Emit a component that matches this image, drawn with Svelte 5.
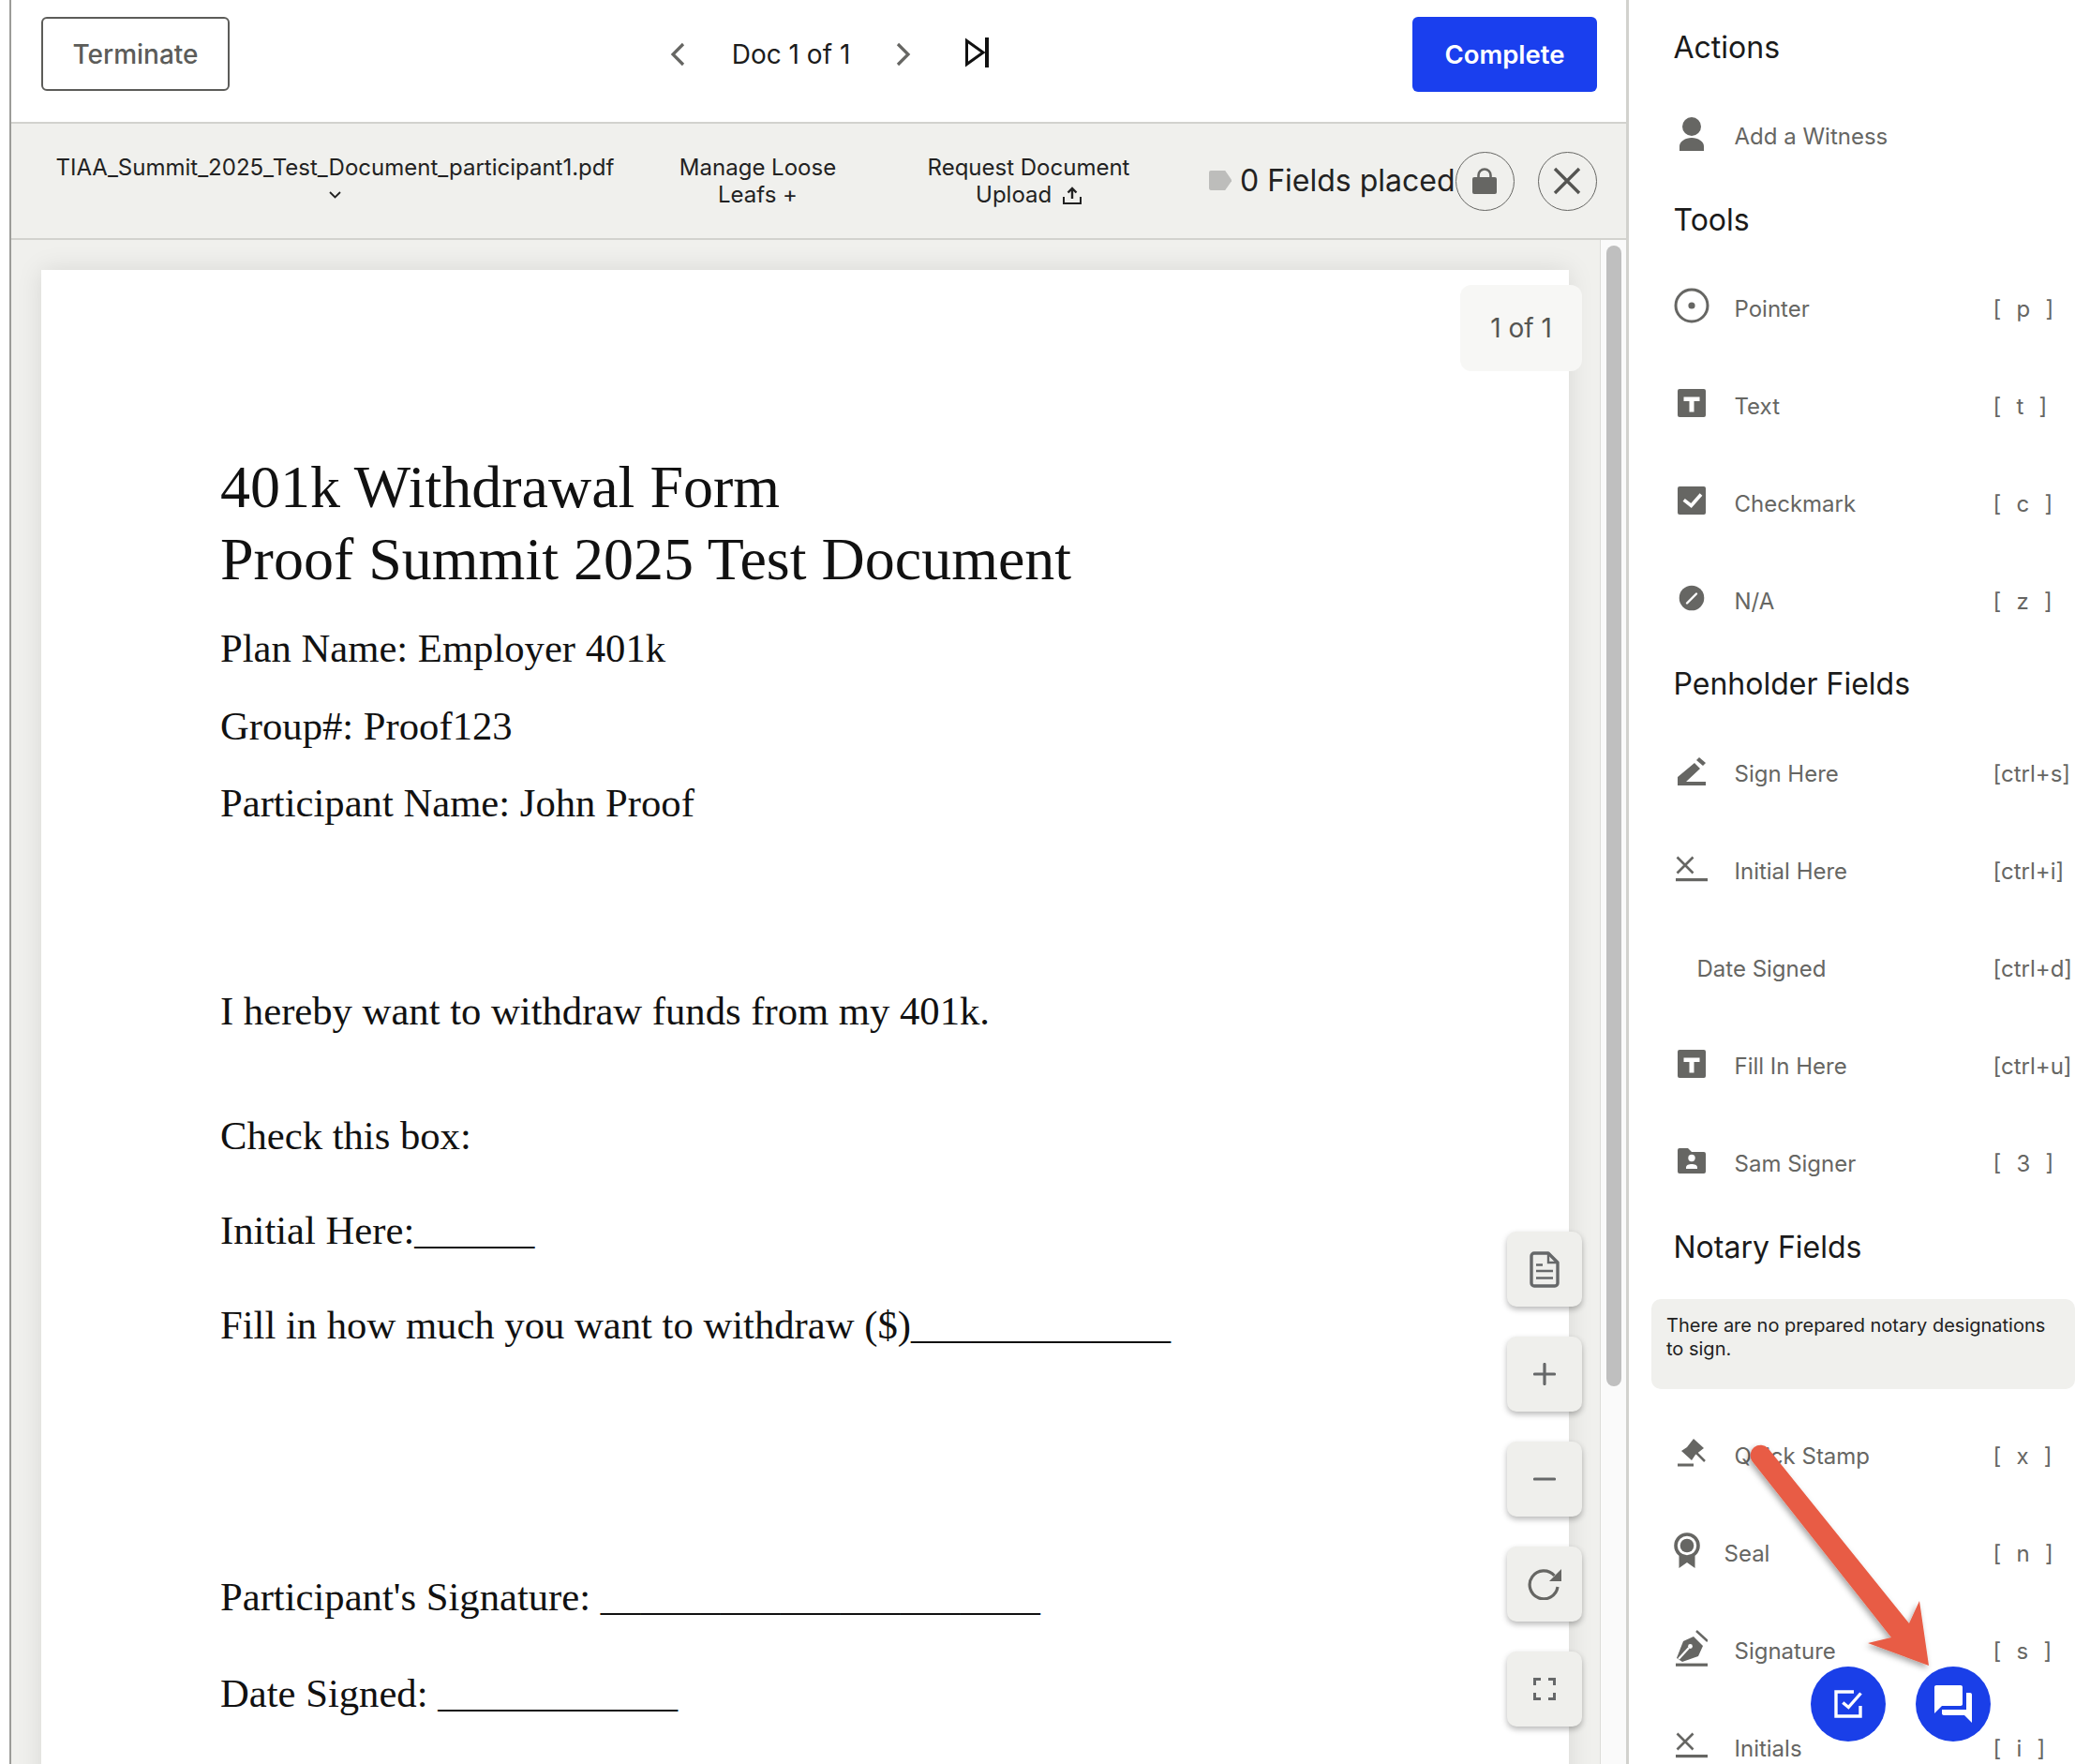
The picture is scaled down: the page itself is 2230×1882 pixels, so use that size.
<script>
  const tools = [
    { icon: 'pointer', label: 'Pointer', key: '[ p ]' },
    { icon: 'text', label: 'Text', key: '[ t ]' },
    { icon: 'check', label: 'Checkmark', key: '[ c ]' },
    { icon: 'na', label: 'N/A', key: '[ z ]' }
  ];
  const pen = [
    { icon: 'sign', label: 'Sign Here', key: '[ctrl+s]' },
    { icon: 'initial', label: 'Initial Here', key: '[ctrl+i]' },
    { icon: '', label: 'Date Signed', key: '[ctrl+d]', cls: 'narrow' },
    { icon: 'text', label: 'Fill In Here', key: '[ctrl+u]' },
    { icon: 'folder', label: 'Sam Signer', key: '[ 3 ]' }
  ];
  const notary = [
    { icon: 'gavel', label: 'Quick Stamp', key: '[ x ]' },
    { icon: 'seal', label: 'Seal', key: '[ n ]', cls: 'mid' },
    { icon: 'nib', label: 'Signature', key: '[ s ]' },
    { icon: 'initial', label: 'Initials', key: '[ i ]' }
  ];
</script>

{#snippet glyph(name)}
  {#if name === 'pointer'}
    <svg width="38" height="38" viewBox="0 0 38 38"><circle cx="19" cy="19" r="17" fill="none" stroke="#666663" stroke-width="3"/><circle cx="19" cy="19" r="3.6" fill="#666663"/></svg>
  {:else if name === 'text'}
    <svg width="30" height="30" viewBox="0 0 30 30"><rect width="30" height="30" rx="2" fill="#666663"/><path d="M6.500 8.500h17v4.600h-6v11.400h-5V13.100h-6z" fill="#fff"/></svg>
  {:else if name === 'check'}
    <svg width="30" height="30" viewBox="0 0 30 30"><rect width="30" height="30" rx="2" fill="#666663"/><path d="M6.700 14.300l7.800 6.200 10.500-12" fill="none" stroke="#fff" stroke-width="3.600"/></svg>
  {:else if name === 'na'}
    <svg width="28" height="28" viewBox="0 0 28 28"><circle cx="14" cy="14" r="13.300" fill="#666663"/><path d="M9 19.500l10-10" stroke="#fff" stroke-width="2.400" stroke-linecap="round"/></svg>
  {:else if name === 'sign'}
    <svg width="30" height="30" viewBox="0 0 30 30"><path d="M0 30v-9L18 6l6 6L9 26h21v4z" fill="#666663"/><path d="M20 3l3-3 7 6-3 3z" fill="#666663"/></svg>
  {:else if name === 'initial'}
    <svg width="34" height="28" viewBox="0 0 34 28"><path d="M1.500 1.500l17 17m0-17l-17 17" stroke="#666663" stroke-width="2.600" fill="none"/><rect y="24" width="34" height="3.200" fill="#666663"/></svg>
  {:else if name === 'folder'}
    <svg width="30" height="27" viewBox="0 0 30 27"><path d="M0 2a2 2 0 0 1 2-2h9l4 4h13a2 2 0 0 1 2 2v19a2 2 0 0 1-2 2H2a2 2 0 0 1-2-2z" fill="#666663"/><circle cx="15" cy="10.500" r="3.700" fill="#fff"/><path d="M9 22v-1.500c0-2.500 3-3.500 6-3.500s6 1 6 3.500V22z" fill="#fff"/></svg>
  {:else if name === 'gavel'}
    <svg width="30" height="30" viewBox="0 0 30 30"><path d="M4 13L10 9 17 0l11 10-9 7-4 6z" fill="#666663"/><path d="M20 15l9 9" stroke="#666663" stroke-width="2.500"/><rect y="26.500" width="17" height="3" fill="#666663"/></svg>
  {:else if name === 'seal'}
    <svg width="28" height="38" viewBox="0 0 28 38"><circle cx="14" cy="14" r="12" fill="none" stroke="#666663" stroke-width="3.600"/><circle cx="14" cy="14" r="7.300" fill="#666663"/><path d="M5.500 24.500q8.500 5 17 0V38L14 32l-8.500 6z" fill="#666663"/></svg>
  {:else if name === 'nib'}
    <svg width="34" height="39" viewBox="0 0 34 39"><path d="M22 1l12 11" stroke="#666663" stroke-width="2.400"/><path d="M1 30l7-18 11-5 10 10-5 11-17 6z" fill="#666663"/><path d="M3 31l11-12" stroke="#fff" stroke-width="2.200"/><circle cx="15.500" cy="17.500" r="2.400" fill="#fff"/><rect y="35.600" width="34" height="3.200" fill="#666663"/></svg>
  {/if}
{/snippet}

{#snippet row(item)}
  <div class="row {item.cls ?? ''}">
    <div class="slot">{@render glyph(item.icon)}</div>
    <div class="label">{item.label}</div>
    <div class="key">{item.key}</div>
  </div>
{/snippet}

<div class="app">
  <main class="main">
    <header class="topbar">
      <button class="terminate">Terminate</button>
      <div class="pager">
        <svg class="chev" width="16" height="26" viewBox="0 0 16 26"><path d="M14 2L3 13l11 11" fill="none" stroke="#666663" stroke-width="3.200"/></svg>
        <span class="doc-count">Doc 1 of 1</span>
        <svg class="chev" width="16" height="26" viewBox="0 0 16 26"><path d="M2 2l11 11L2 24" fill="none" stroke="#666663" stroke-width="3.200"/></svg>
        <svg class="skip" width="26" height="32" viewBox="0 0 26 32"><path d="M2.500 3.500L20 16 2.500 28.500z" fill="none" stroke="#111" stroke-width="3"/><rect x="22" width="4" height="32" fill="#111"/></svg>
      </div>
      <button class="complete">Complete</button>
    </header>

    <div class="subbar">
      <div class="sub-item file">
        <div>TIAA_Summit_2025_Test_Document_participant1.pdf</div>
        <svg class="down" width="13" height="8" viewBox="0 0 13 8"><path d="M1 1l5.500 5.500L12 1" fill="none" stroke="#222" stroke-width="1.800"/></svg>
      </div>
      <div class="sub-item loose">Manage Loose<br />Leafs +</div>
      <div class="sub-item request">
        Request Document<br />Upload
        <svg class="upload" width="20" height="19" viewBox="0 0 20 19"><path d="M10 13V2M5.500 6.500L10 2l4.500 4.500" fill="none" stroke="#222" stroke-width="2.400"/><path d="M1 11v7h18v-7" fill="none" stroke="#222" stroke-width="2"/></svg>
      </div>
      <div class="fields">
        <svg width="27" height="23" viewBox="0 0 27 23"><path d="M2 0h17l8 11.500L19 23H2a2 2 0 0 1-2-2V2a2 2 0 0 1 2-2z" fill="#bdbdbb"/></svg>
        <span>0 Fields placed</span>
      </div>
      <button class="round">
        <svg width="26" height="28" viewBox="0 0 26 28"><path d="M6.500 11V8a6.500 6.500 0 0 1 13 0v3" fill="none" stroke="#666663" stroke-width="2.600"/><rect y="10" width="26" height="18" rx="2" fill="#666663"/></svg>
      </button>
      <button class="round close">
        <svg width="30" height="30" viewBox="0 0 30 30"><path d="M2 2l26 26M28 2L2 28" stroke="#555552" stroke-width="3.400"/></svg>
      </button>
    </div>

    <div class="viewer">
      <div class="canvas">
        <article class="page">
          <h1>401k Withdrawal Form<br />Proof Summit 2025 Test Document</h1>
          <p class="plan">Plan Name: Employer 401k</p>
          <p class="group">Group#: Proof123</p>
          <p class="part">Participant Name: John Proof</p>
          <p class="hereby">I hereby want to withdraw funds from my 401k.</p>
          <p class="boxline">Check this box:</p>
          <p class="initial">Initial Here:______</p>
          <p class="fill">Fill in how much you want to withdraw ($)_____________</p>
          <p class="sig">Participant's Signature: ______________________</p>
          <p class="date">Date Signed: ____________</p>
        </article>
        <div class="page-badge">1 of 1</div>
        <div class="controls">
          <button class="ctl"><svg width="32" height="39" viewBox="0 0 32 39"><path d="M5 2h15l10 10v22a3 3 0 0 1-3 3H5a3 3 0 0 1-3-3V5a3 3 0 0 1 3-3z" fill="none" stroke="#666869" stroke-width="3.400" stroke-linejoin="round"/><path d="M20 2v10h10" fill="none" stroke="#666869" stroke-width="2.400"/><path d="M7 14.500h7M7 21h18M7 28.500h18" stroke="#666869" stroke-width="2.600"/></svg></button>
          <button class="ctl"><svg width="24" height="24" viewBox="0 0 24 24"><path d="M12 1.500v21M1.500 12h21" stroke="#666869" stroke-width="3.200" stroke-linecap="round"/></svg></button>
          <button class="ctl"><svg width="24" height="24" viewBox="0 0 24 24"><path d="M1.500 12h21" stroke="#666869" stroke-width="3.200" stroke-linecap="round"/></svg></button>
          <button class="ctl"><svg width="36" height="34" viewBox="0 0 36 34"><path d="M28.500 8A15 15 0 1 0 32 20" fill="none" stroke="#666663" stroke-width="3.200"/><path d="M36 1v13H23z" fill="#666663"/></svg></button>
          <button class="ctl"><svg width="24" height="24" viewBox="0 0 24 24"><path d="M1.500 8V1.500H8M16 1.500h6.500V8M22.500 16v6.500H16M8 22.500H1.500V16" fill="none" stroke="#666869" stroke-width="3"/></svg></button>
        </div>
      </div>
      <div class="track"><div class="thumb"></div></div>
    </div>
  </main>

  <aside class="side">
    <h2>Actions</h2>
    <div class="row witness">
      <div class="slot"><svg width="26" height="36" viewBox="0 0 26 36"><circle cx="13" cy="10" r="10" fill="#666663"/><path d="M0 36v-5c0-5 6-9 13-9s13 4 13 9v5z" fill="#666663"/></svg></div>
      <div class="label">Add a Witness</div>
    </div>
    <h2>Tools</h2>
    {#each tools as t}{@render row(t)}{/each}
    <h2 class="penholder">Penholder Fields</h2>
    {#each pen as t}{@render row(t)}{/each}
    <h2 class="notary">Notary Fields</h2>
    <div class="note">There are no prepared notary designations to sign.</div>
    {#each notary as t}{@render row(t)}{/each}
  </aside>

  <svg class="arrow" width="230" height="260" viewBox="-10 -10 230 260">
    <defs><filter id="ds" x="-20%" y="-20%" width="140%" height="140%"><feDropShadow dx="-2" dy="3" stdDeviation="3" flood-color="#000" flood-opacity=".35"/></filter></defs>
    <path d="M24.600 .2L175 187 186 163 196 232 131 208 156 202 7.400 13.800A11 11 0 0 1 24.600 .2z" fill="#e85c44" filter="url(#ds)"/>
  </svg>

  <button class="fab one"><svg width="30" height="30" viewBox="0 0 30 30"><path d="M21 2H2v26h26V17" fill="none" stroke="#fff" stroke-width="3.400"/><path d="M9.300 13.500l6 5L28.500 3.500" fill="none" stroke="#fff" stroke-width="3.400"/></svg></button>
  <button class="fab two"><svg width="48" height="48" viewBox="0 0 24 24"><path d="M21 6h-2v9H6v2c0 .55.45 1 1 1h11l4 4V7c0-.55-.45-1-1-1zm-4 6V3c0-.55-.45-1-1-1H3c-.55 0-1 .45-1 1v14l4-4h10c.55 0 1-.45 1-1z" fill="#fff"/></svg></button>
</div>

<style>
  :global(body) { margin: 0; background: #fff; }
  .app {
    position: relative;
    display: flex;
    width: 2230px;
    height: 1882px;
    overflow: hidden;
    padding-left: 10px;
    box-sizing: border-box;
    font-family: Inter, "Liberation Sans", sans-serif;
    background: #fff;
  }
  button { font-family: inherit; cursor: pointer; }

  .main {
    width: 1728px;
    flex: none;
    display: flex;
    flex-direction: column;
    border-left: 2px solid #9c9c98;
    border-right: 3px solid #d2d2ce;
    box-sizing: border-box;
    height: 1882px;
  }
  .topbar {
    height: 130px;
    flex: none;
    box-sizing: border-box;
    display: flex;
    align-items: flex-start;
    justify-content: space-between;
    padding: 18px 31px 0 32px;
  }
  .terminate {
    width: 201px;
    height: 79px;
    background: #fff;
    border: 2px solid #5c5c59;
    border-radius: 6px;
    font-size: 28px;
    font-weight: 500;
    color: #5c5c59;
    padding: 0;
  }
  .complete {
    width: 197px;
    height: 80px;
    background: #1a3fee;
    border: none;
    border-radius: 6px;
    font-size: 27.500px;
    font-weight: 600;
    color: #fff;
    padding: 0;
  }
  .pager {
    display: flex;
    align-items: center;
    height: 80px;
    margin-left: 18px;
  }
  .doc-count { font-size: 28px; color: #1c1c1c; margin: 0 49px 0 50px; }
  .skip { margin-left: 57px; margin-top: -4px; }
  .subbar {
    height: 126px;
    flex: none;
    box-sizing: border-box;
    display: flex;
    align-items: center;
    background: #f0f0ed;
    border-top: 2px solid #d2d2ce;
    border-bottom: 2px solid #d2d2ce;
    padding-left: 47.500px;
  }
  .sub-item {
    font-size: 24px;
    line-height: 29px;
    color: #222;
    text-align: center;
    white-space: nowrap;
  }
  .file { width: 595px; }
  .down { display: block; margin: 11px auto 10px; }
  .loose { margin-left: 70px; width: 168px; }
  .request { margin-left: 97px; width: 216px; }
  .upload { vertical-align: -2px; margin-left: 5px; }
  .fields {
    display: flex;
    align-items: center;
    gap: 9px;
    margin: -2px 0 0 84px;
    font-size: 32px;
    color: #222;
    white-space: nowrap;
    width: 263px;
    flex: none;
  }
  .round {
    width: 63px;
    height: 63px;
    flex: none;
    border-radius: 50%;
    border: 1.500px solid #666663;
    background: transparent;
    padding: 0;
    display: flex;
    align-items: center;
    justify-content: center;
  }
  .close { margin-left: 25px; }

  .viewer { flex: 1; min-height: 0; display: flex; background: #f0f0ed; }
  .canvas {
    position: relative;
    flex: 1;
    min-width: 0;
    overflow: hidden;
    padding: 32px 0 0 32px;
    box-sizing: border-box;
  }
  .page {
    width: 1630px;
    height: 1800px;
    background: #fff;
    box-shadow: 0 0 26px rgba(0, 0, 0, 0.1);
    box-sizing: border-box;
    padding: 193px 0 0 191px;
    font-family: "Liberation Serif", "Times New Roman", serif;
    color: #111;
  }
  h1 {
    margin: 0;
    font-size: 64px;
    line-height: 77px;
    font-weight: 400;
  }
  .page p { margin: 0; font-size: 42.670px; line-height: 50px; white-space: nowrap; }
  .plan { padding-top: 32px; }
  .group { padding-top: 33px; }
  .part { padding-top: 32px; }
  .hereby { padding-top: 172px; }
  .boxline { padding-top: 83px; }
  .initial { padding-top: 51px; }
  .fill { padding-top: 51px; }
  .sig { padding-top: 240px; }
  .date { padding-top: 53px; }

  .page-badge {
    position: absolute;
    top: 48px;
    left: 1546px;
    width: 130px;
    height: 92px;
    border-radius: 12px;
    background: #f7f7f5;
    display: flex;
    align-items: center;
    justify-content: center;
    font-size: 28px;
    color: #555552;
  }
  .controls {
    position: absolute;
    top: 1058px;
    left: 1596px;
    display: flex;
    flex-direction: column;
    gap: 32px;
  }
  .ctl {
    width: 80px;
    height: 80px;
    border: none;
    border-radius: 10px;
    background: #efefec;
    box-shadow: 0 3px 6px rgba(0, 0, 0, 0.28);
    padding: 0;
    display: flex;
    align-items: center;
    justify-content: center;
  }
  .track {
    width: 28px;
    flex: none;
    background: #fafafa;
    border-left: 1.500px solid #dcdcd9;
    box-sizing: border-box;
    padding: 6px 5px 0 6px;
  }
  .thumb { height: 1217px; border-radius: 8px; background: #bfbfbf; }

  .side {
    flex: 1;
    min-width: 0;
    padding-top: 14px;
    height: 1882px;
    box-sizing: border-box;
  }
  h2 {
    margin: 0 0 7px;
    height: 72.500px;
    line-height: 74px;
    padding-left: 47.500px;
    font-size: 32px;
    font-weight: 400;
    color: #1a1a1a;
    white-space: nowrap;
  }
  h2.penholder { margin-bottom: 8px; }
  h2.notary { margin-bottom: 20px; }
  .row {
    height: 104px;
    display: flex;
    align-items: center;
    padding-left: 47.500px;
    font-size: 24px;
    color: #666663;
  }
  .slot {
    width: 65px;
    flex: none;
    padding-right: 26px;
    box-sizing: border-box;
    display: flex;
    justify-content: center;
    margin-top: -6px;
  }
  .slot svg { display: block; flex: none; }
  .mid .slot { width: 54px; padding-right: 26px; }
  .narrow .slot { width: 25px; padding-right: 0; }
  .label { flex: 1; white-space: nowrap; }
  .key { width: 103.500px; flex: none; white-space: nowrap; word-spacing: 9.500px; }
  .witness .label { flex: 1; }
  .note {
    margin: 0 16px 19px 24px;
    height: 96px;
    box-sizing: border-box;
    border-radius: 10px;
    background: #f0f0ed;
    padding: 16px;
    font-size: 20px;
    line-height: 25px;
    color: #222;
  }

  .arrow { position: absolute; left: 1852px; top: 1535px; pointer-events: none; }
  .fab {
    position: absolute;
    top: 1778px;
    width: 80px;
    height: 80px;
    border-radius: 50%;
    border: none;
    background: #1a3fe8;
    padding: 0;
    display: flex;
    align-items: center;
    justify-content: center;
  }
  .one { left: 1932px; }
  .two { left: 2044px; }
</style>
